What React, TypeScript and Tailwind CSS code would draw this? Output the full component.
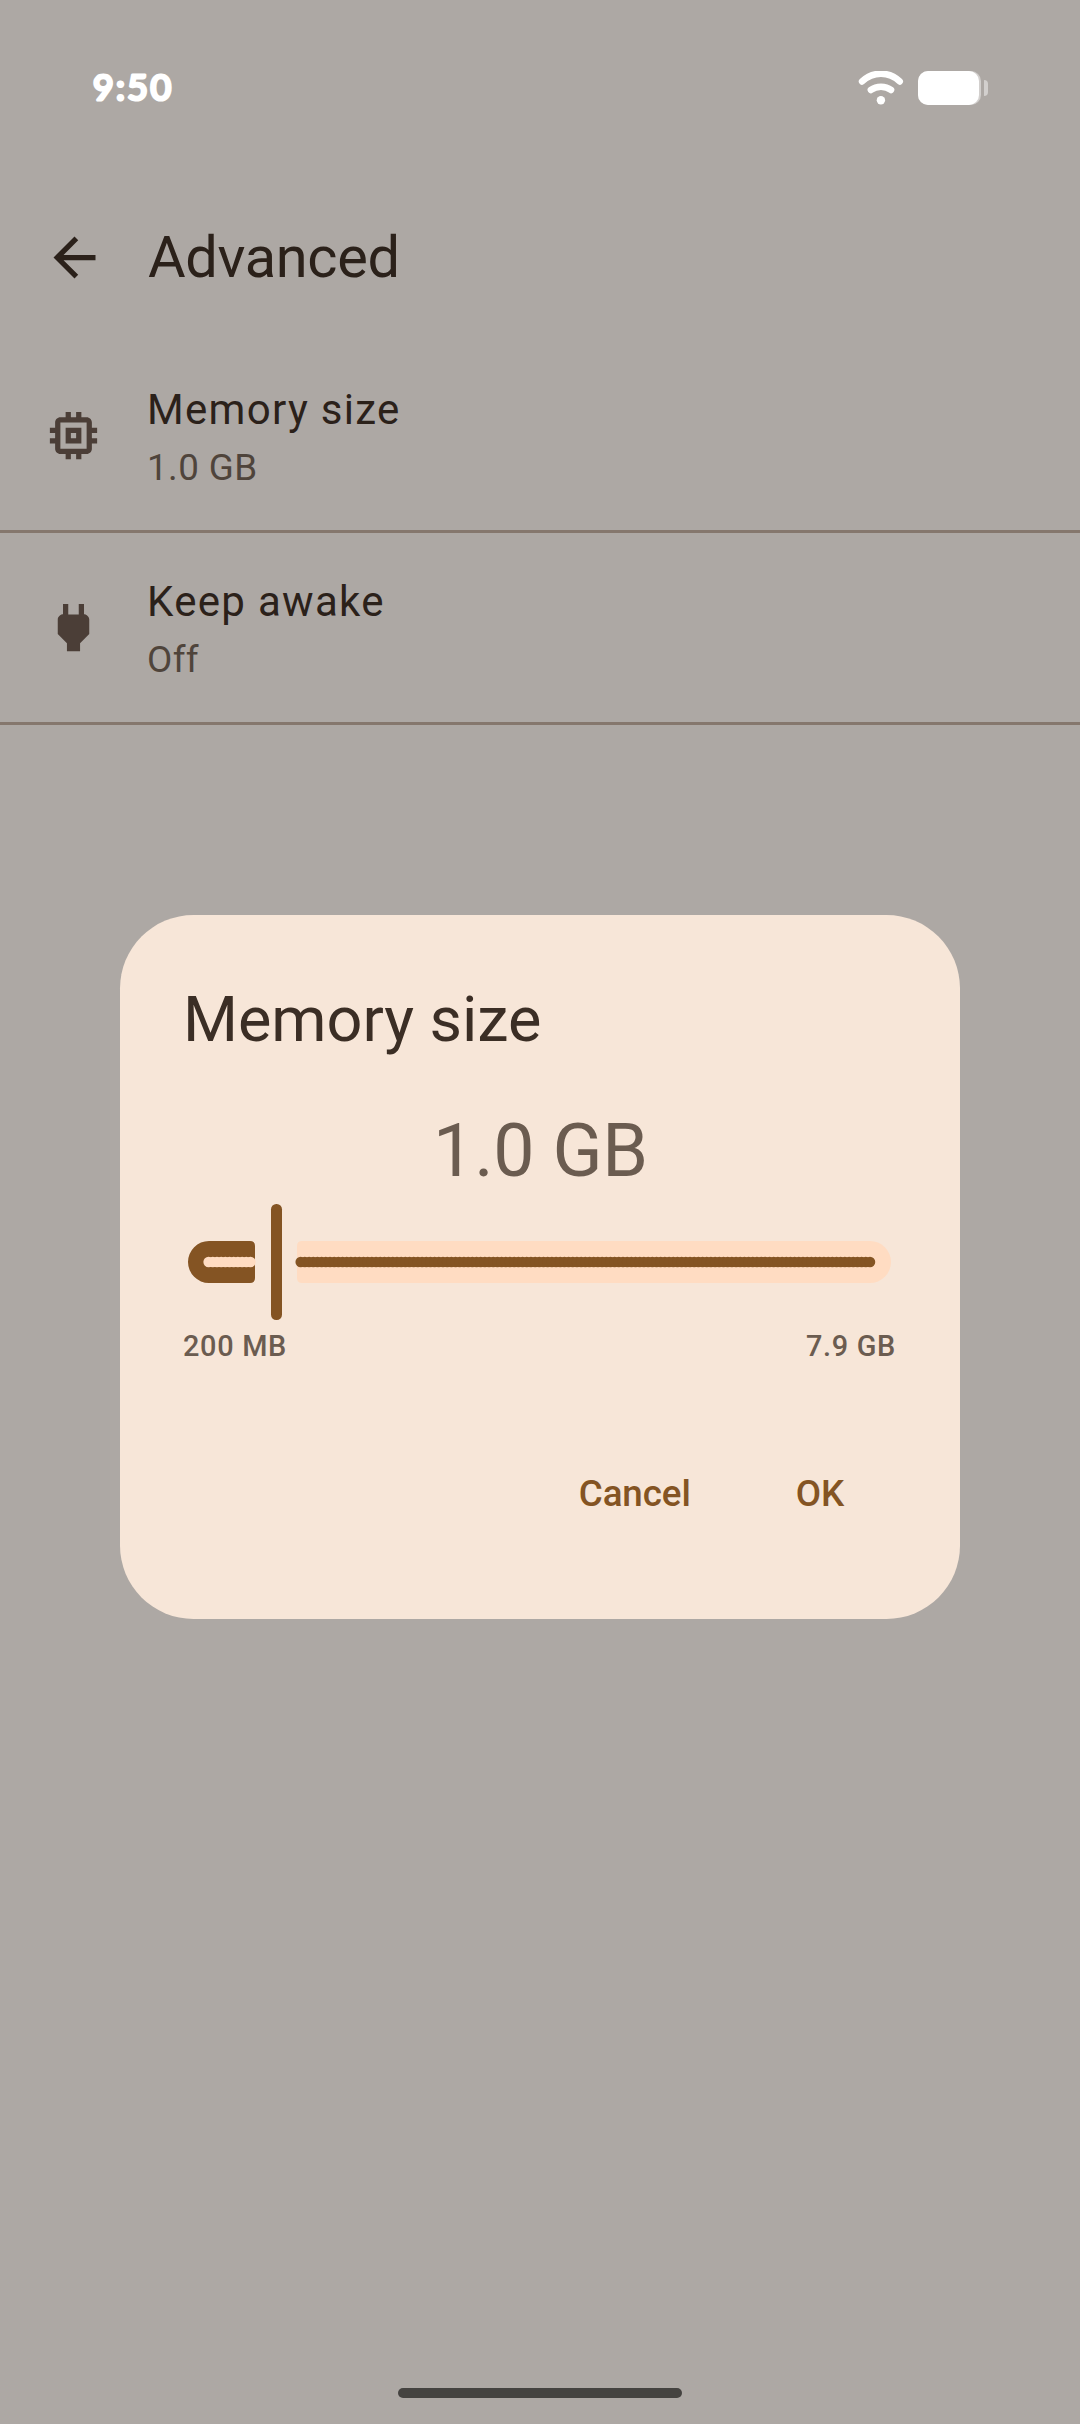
import React from "react";

const FIRST_TICK = 25.6;
const TICK_STEP = 4.186;
const TICK_COUNT = 159;
const ACTIVE_TICKS = 11;
const FIRST_INACTIVE_TICK = 22;

function StatusBar() {
  return (
    <header className="flex h-[174px] items-start justify-between pl-[80px] pr-[92px] pt-[56px] text-white">
      <svg width="110" height="64" viewBox="0 0 110 64" className="block">
        <text
          x="13"
          y="43.6"
          fontFamily="Lato, sans-serif"
          fontWeight="400"
          fontSize="35.5"
          textLength="78"
          fill="white"
          stroke="white"
          strokeWidth="3.2"
          strokeLinejoin="round"
        >
          9:50
        </text>
      </svg>
      <div className="flex items-start pt-[10px]">
        <svg width="46" height="36" viewBox="0 0 46 36" fill="none" stroke="white" strokeLinecap="round" className="mr-[14px] mt-[5px]">
          <path d="M4.1 10.400 C15 .2 31 .2 41.700 10.400" strokeWidth="6.6" />
          <path d="M12.900 18.900 C18.500 14.600 27.500 14.600 33 18.900" strokeWidth="6.6" />
          <circle cx="22.9" cy="29.2" r="4.2" fill="white" stroke="none" />
        </svg>
        <div className="mt-[5px] flex items-center gap-[3px]">
          <div className="h-[34px] w-[63px] rounded-[10px] bg-white/45">
            <div className="h-[34px] w-[61px] rounded-[10px] bg-white" />
          </div>
          <div className="h-4 w-1 rounded-r-[4px] bg-white/45" />
        </div>
      </div>
    </header>
  );
}

function MemoryIcon() {
  return (
    <svg width="63" height="63" viewBox="0 0 24 24" fill="#4b3e37">
      <path d="M15 9H9v6h6V9zm-2 4h-2v-2h2v2zm8-2V9h-2V7c0-1.100-.9-2-2-2h-2V3h-2v2h-2V3H9v2H7c-1.100 0-2 .9-2 2v2H3v2h2v2H3v2h2v2c0 1.100.9 2 2 2h2v2h2v-2h2v2h2v-2h2c1.100 0 2-.9 2-2v-2h2v-2h-2v-2h2zm-4 6H7V7h10v10z" />
    </svg>
  );
}

function PowerIcon() {
  return (
    <svg width="63" height="63" viewBox="0 0 24 24" fill="#4b3e37">
      <path d="M16.010 7L16 3h-2v4h-4V3H8v4h-.010C7 6.990 6 7.990 6 8.990v5.490L9.500 18v3h5v-3l3.500-3.510v-5.500c0-1-1-2-1.990-1.990z" />
    </svg>
  );
}

function SettingRow({ icon, title, value }: { icon: React.ReactNode; title: string; value: string }) {
  return (
    <div className="flex h-[192px] items-start border-b-[3px] border-[#85776d] pl-[42px]">
      <div className="mt-[63px]">{icon}</div>
      <div className="ml-[42px] mt-[37px]">
        <div className="text-[42px] leading-[63px] tracking-[1.31px] text-[#2b211a]">{title}</div>
        <div className="mt-[1px] text-[36.75px] leading-[52px] tracking-[0.4px] text-[#4f443b]">{value}</div>
      </div>
    </div>
  );
}

function MemorySlider() {
  const ticks = Array.from({ length: TICK_COUNT }, (_, i) => i).filter(
    (i) => i < ACTIVE_TICKS || i >= FIRST_INACTIVE_TICK,
  );
  return (
    <svg width="714" height="116" viewBox="0 0 714 116" className="block">
      <path d="M26 37H67q5 0 5 5V74q0 5-5 5H26a21 21 0 0 1 0-42z" fill="#845423" />
      <path d="M119 37H687a21 21 0 0 1 0 42H119q-5 0-5-5V42q0-5 5-5z" fill="#ffdcc2" />
      {ticks.map((i) => (
        <circle
          key={i}
          cx={FIRST_TICK + i * TICK_STEP}
          cy="58"
          r="5.25"
          fill={i < ACTIVE_TICKS ? "#ffdcc2" : "#845423"}
        />
      ))}
      <rect x="88" y="0" width="11" height="116" rx="5.25" fill="#845423" />
    </svg>
  );
}

function MemoryDialog() {
  return (
    <section className="absolute left-[120px] top-[915px] h-[704px] w-[840px] rounded-[73.5px] bg-[#f7e6d8] px-[63px] pt-[63px]">
      <h2 className="text-[63px] leading-[84px] tracking-[-0.05px] text-[#3b2e25]">Memory size</h2>
      <div className="mt-[42px] pl-[1px] text-center text-[73.5px] leading-[94px] tracking-[-0.2px] text-[#6b5c50]">1.0 GB</div>
      <div className="mt-[6px]">
        <MemorySlider />
      </div>
      <div className="mt-[5px] flex justify-between text-[28.875px] font-medium leading-[42px] tracking-[0.7px] text-[#6b5c50]">
        <span>200 MB</span>
        <span className="mr-[1px]">7.9 GB</span>
      </div>
      <div className="mt-[101px] flex justify-end gap-[105px] pr-[53px] text-[36.75px] font-medium leading-[52px] tracking-[-0.1px] text-[#845423]">
        <button>Cancel</button>
        <button>OK</button>
      </div>
    </section>
  );
}

export default function App() {
  return (
    <main className="relative flex h-[2424px] w-[1080px] flex-col overflow-hidden bg-[#ada8a4] font-['Roboto',sans-serif]">
      <StatusBar />
      <div className="mb-[2px] flex h-[165px] items-center pl-[43px]">
        <svg width="63" height="63" viewBox="0 0 24 24" fill="#2b211a" className="mt-[2px]">
          <path d="M20 11H7.830l5.590-5.590L12 4l-8 8 8 8 1.410-1.410L7.830 13H20v-2z" />
        </svg>
        <h1 className="ml-[42px] text-[57.75px] leading-[74px] tracking-[-0.35px] text-[#2b211a]">Advanced</h1>
      </div>
      <SettingRow icon={<MemoryIcon />} title="Memory size" value="1.0 GB" />
      <SettingRow icon={<PowerIcon />} title="Keep awake" value="Off" />
      <div className="mb-[26px] mt-auto h-[10px] w-[284px] self-center rounded-full bg-[#454340]" />
      <MemoryDialog />
    </main>
  );
}
